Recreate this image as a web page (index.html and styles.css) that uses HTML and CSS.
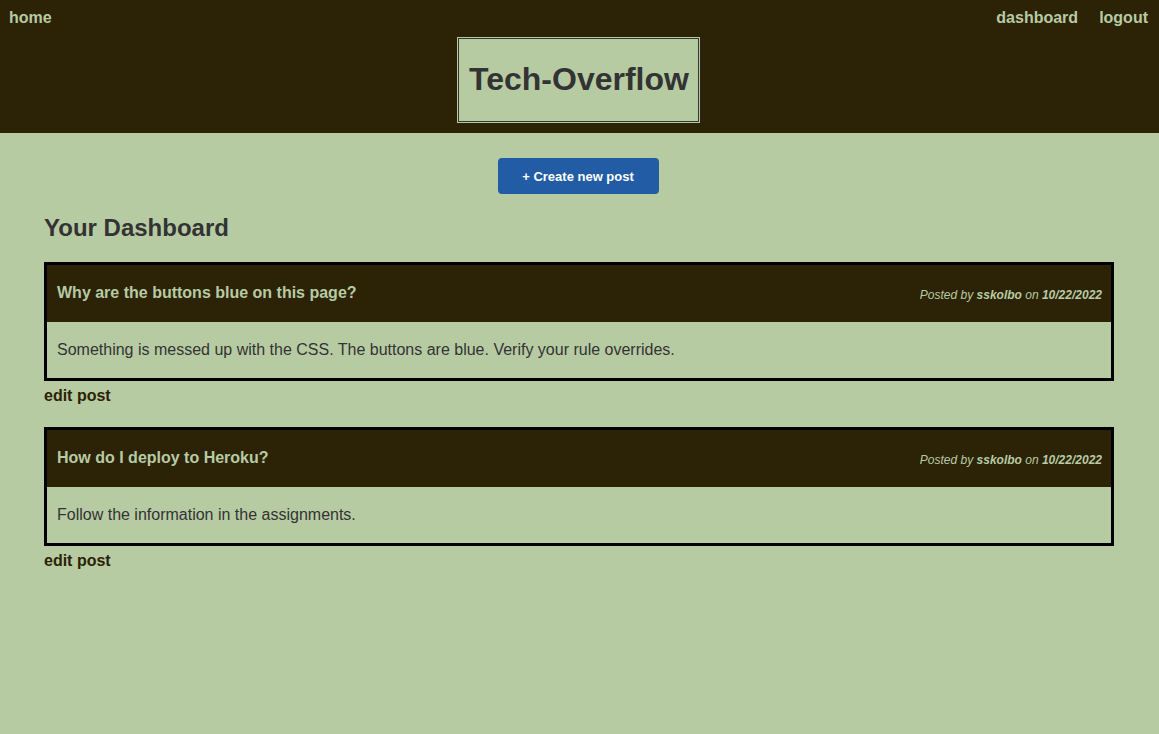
FILE: index.html
```html
<!DOCTYPE html>
<html lang="en">
<head>
<meta charset="utf-8">
<title>Tech-Overflow</title>
<link rel="stylesheet" href="styles.css">
</head>
<body>
<header class="site-header">
  <nav class="nav">
    <a class="nav-link" href="#">home</a>
    <div class="nav-right">
      <a class="nav-link" href="#">dashboard</a>
      <a class="nav-link" href="#">logout</a>
    </div>
  </nav>
  <div class="brand-wrap">
    <h1 class="brand">Tech-Overflow</h1>
  </div>
</header>
<main class="main">
  <div class="action-row">
    <button class="btn-create">+ Create new post</button>
  </div>
  <h2 class="dash-title">Your Dashboard</h2>
  <section class="post-list">
    <div class="post-item">
      <article class="post">
        <div class="post-head">
          <h3 class="post-title">Why are the buttons blue on this page?</h3>
          <span class="post-meta">Posted by <b>sskolbo</b> on <b>10/22/2022</b></span>
        </div>
        <div class="post-body">Something is messed up with the CSS. The buttons are blue. Verify your rule overrides.</div>
      </article>
      <a class="edit-link" href="#">edit post</a>
    </div>
    <div class="post-item">
      <article class="post">
        <div class="post-head">
          <h3 class="post-title">How do I deploy to Heroku?</h3>
          <span class="post-meta">Posted by <b>sskolbo</b> on <b>10/22/2022</b></span>
        </div>
        <div class="post-body">Follow the information in the assignments.</div>
      </article>
      <a class="edit-link" href="#">edit post</a>
    </div>
  </section>
</main>
</body>
</html>
```
FILE: styles.css
```css
* { box-sizing: border-box; }
html, body { margin: 0; padding: 0; }
body {
  background: #b7cba3;
  color: #333;
  font-family: "Liberation Sans", Arial, sans-serif;
  font-size: 16px;
  min-height: 734px;
}
.site-header {
  background: #2c2206;
  padding: 9px 11px 11px 9px;
}
.nav {
  display: flex;
  justify-content: space-between;
  align-items: center;
  height: 18px;
}
.nav-right {
  display: flex;
  gap: 21px;
}
.nav-link {
  color: #b7cba3;
  font-weight: bold;
  font-size: 16px;
  text-decoration: none;
  line-height: 18px;
}
.brand-wrap {
  display: flex;
  justify-content: center;
  margin-top: 11px;
}
.brand {
  margin: 0;
  background: #b7cba3;
  color: #333;
  font-size: 32px;
  font-weight: bold;
  line-height: 37px;
  padding: 22px 9px 23px 10px;
  border: 1px solid #333;
  outline: 1px solid #b7cba3;
  white-space: nowrap;
  text-align: center;
}
.main {
  padding: 25px 45px 40px 44px;
}
.action-row {
  display: flex;
  justify-content: center;
}
.btn-create {
  background: #225ca4;
  color: #fff;
  border: none;
  border-radius: 4px;
  font-family: "Liberation Sans", Arial, sans-serif;
  font-size: 13px;
  font-weight: bold;
  width: 161px;
  height: 36px;
  padding: 0;
  margin-right: 2px;
  cursor: pointer;
}
.dash-title {
  margin: 20px 0 20px;
  font-size: 24px;
  line-height: 28px;
  font-weight: bold;
  color: #333;
}
.post-list {
  display: flex;
  flex-direction: column;
  gap: 22px;
}
.post {
  border: 3px solid #000;
}
.post-head {
  background: #2c2206;
  display: flex;
  justify-content: space-between;
  align-items: baseline;
  padding: 19px 9px 19px 10px;
  height: 57px;
}
.post-title {
  margin: 0;
  font-size: 16px;
  font-weight: bold;
  line-height: 18px;
  color: #b7cba3;
}
.post-meta {
  font-size: 12px;
  font-style: italic;
  color: #b7cba3;
  position: relative;
  top: 1px;
}
.post-body {
  padding: 19px 10px;
  line-height: 18px;
  font-size: 16px;
  color: #333;
  height: 56px;
}
.edit-link {
  display: block;
  margin-top: 6px;
  color: #2c2206;
  font-weight: bold;
  font-size: 16px;
  line-height: 18px;
  text-decoration: none;
}
```
